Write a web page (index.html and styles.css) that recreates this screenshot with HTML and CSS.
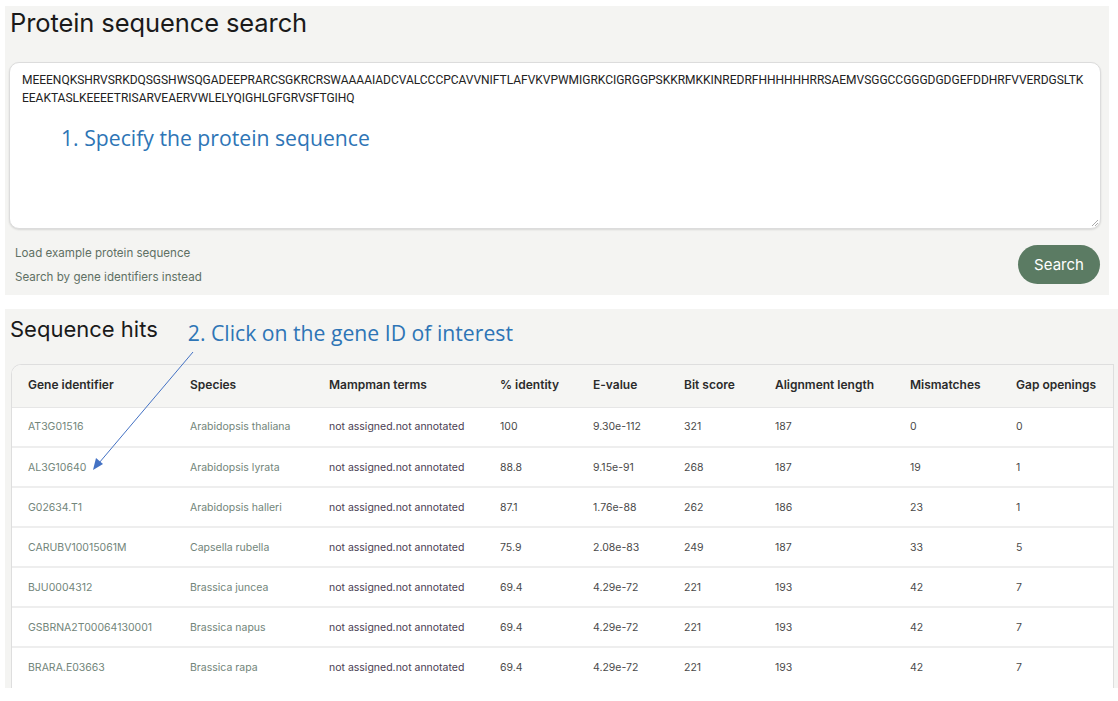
FILE: index.html
```html
<!DOCTYPE html>
<html>
<head>
<meta charset="utf-8">
<link rel="stylesheet" href="styles.css">
</head>
<body>
<div class="page">
  <section class="panel search-panel">
    <h1 class="title">Protein sequence search</h1>
    <div class="seq-box">
      <div class="seq-text">MEEENQKSHRVSRKDQSGSHWSQGADEEPRARCSGKRCRSWAAAAIADCVALCCCPCAVVNIFTLAFVKVPWMIGRKCIGRGGPSKKRMKKINREDRFHHHHHHRRSAEMVSGGCCGGGDGDGEFDDHRFVVERDGSLTK<br>EEAKTASLKEEEETRISARVEAERVWLELYQIGHLGFGRVSFTGIHQ</div>
      <div class="note note-1">1. Specify the protein sequence</div>
      <svg class="grip" width="8" height="8" viewBox="0 0 8 8"><path d="M7 1L1 7M7 4L4 7" stroke="#aaa" stroke-width="1"/></svg>
    </div>
    <div class="actions">
      <div class="links">
        <span class="link">Load example protein sequence</span>
        <span class="link">Search by gene identifiers instead</span>
      </div>
      <button class="btn">Search</button>
    </div>
  </section>

  <section class="panel hits-panel">
    <div class="hits-head">
      <h2 class="subtitle">Sequence hits</h2>
      <div class="note note-2">2. Click on the gene ID of interest</div>
    </div>
    <div class="table-card">
      <table class="hits">
        <thead>
          <tr>
            <th class="c1">Gene identifier</th>
            <th class="c2">Species</th>
            <th class="c3">Mampman terms</th>
            <th class="c4">% identity</th>
            <th class="c5">E-value</th>
            <th class="c6">Bit score</th>
            <th class="c7">Alignment length</th>
            <th class="c8">Mismatches</th>
            <th class="c9">Gap openings</th>
          </tr>
        </thead>
        <tbody>
          <tr><td class="gid">AT3G01516</td><td class="sp">Arabidopsis thaliana</td><td class="mm">not assigned.not annotated</td><td>100</td><td>9.30e-112</td><td>321</td><td>187</td><td>0</td><td>0</td></tr>
          <tr><td class="gid">AL3G10640</td><td class="sp">Arabidopsis lyrata</td><td class="mm">not assigned.not annotated</td><td>88.8</td><td>9.15e-91</td><td>268</td><td>187</td><td>19</td><td>1</td></tr>
          <tr><td class="gid">G02634.T1</td><td class="sp">Arabidopsis halleri</td><td class="mm">not assigned.not annotated</td><td>87.1</td><td>1.76e-88</td><td>262</td><td>186</td><td>23</td><td>1</td></tr>
          <tr><td class="gid">CARUBV10015061M</td><td class="sp">Capsella rubella</td><td class="mm">not assigned.not annotated</td><td>75.9</td><td>2.08e-83</td><td>249</td><td>187</td><td>33</td><td>5</td></tr>
          <tr><td class="gid">BJU0004312</td><td class="sp">Brassica juncea</td><td class="mm">not assigned.not annotated</td><td>69.4</td><td>4.29e-72</td><td>221</td><td>193</td><td>42</td><td>7</td></tr>
          <tr><td class="gid">GSBRNA2T00064130001</td><td class="sp">Brassica napus</td><td class="mm">not assigned.not annotated</td><td>69.4</td><td>4.29e-72</td><td>221</td><td>193</td><td>42</td><td>7</td></tr>
          <tr><td class="gid">BRARA.E03663</td><td class="sp">Brassica rapa</td><td class="mm">not assigned.not annotated</td><td>69.4</td><td>4.29e-72</td><td>221</td><td>193</td><td>42</td><td>7</td></tr>
        </tbody>
      </table>
    </div>
    <svg class="arrow" width="120" height="130" viewBox="0 0 120 130">
      <line x1="108" y1="3" x2="14" y2="114" stroke="#4472c4" stroke-width="1"/>
      <path d="M8 121 L11 109 L18 115 Z" fill="#4472c4"/>
    </svg>
  </section>
</div>
</body>
</html>
```

FILE: styles.css
```css
* { box-sizing: border-box; }
html, body { margin: 0; padding: 0; background: #ffffff; }
body { font-family: Inter, "Liberation Sans", sans-serif; color: #222; }

.page {
  display: flex;
  flex-direction: column;
  gap: 14px;
  padding: 6px 0 0 5px;
  width: 1118px;
  height: 688px;
  overflow: hidden;
}

.panel { background: #f4f4f2; }

.search-panel {
  width: 1104px;
  height: 289px;
  padding: 0 8px 0 4px;
  display: flex;
  flex-direction: column;
}

.title {
  margin: 0;
  font-weight: 400;
  font-size: 25.5px;
  line-height: 32px;
  padding: 1px 0 0 1px;
  color: #1a1a1a;
  letter-spacing: -0.1px;
}

.seq-box {
  position: relative;
  margin-top: 23px;
  height: 167px;
  background: #fff;
  border: 1px solid #dcdcdc;
  border-radius: 10px;
  box-shadow: 0 1px 2px rgba(0,0,0,0.12);
  padding: 8px 12px;
}

.seq-text {
  font-family: Roboto, "Liberation Sans", sans-serif;
  font-size: 12px;
  line-height: 18px;
  color: #222;
  letter-spacing: -0.02px;
  white-space: nowrap;
}

.note {
  font-family: "Open Sans", "Noto Sans", sans-serif;
  color: #2e75b6;
  font-size: 21.2px;
  line-height: 26px;
}

.note-1 { margin: 18px 0 0 39px; }

.grip { position: absolute; right: 1px; bottom: 1px; }

.actions {
  display: flex;
  justify-content: space-between;
  align-items: flex-start;
  padding: 16px 0 0 6px;
}

.links {
  display: flex;
  flex-direction: column;
  gap: 7px;
}

.link {
  font-size: 11.6px;
  line-height: 17px;
  color: #5f7064;
}

.btn {
  width: 82px;
  height: 39px;
  border: none;
  border-radius: 20px;
  background: #5b7b63;
  color: #fff;
  font-family: Inter, "Liberation Sans", sans-serif;
  font-size: 15px;
  margin-right: 1px;
}

.hits-panel {
  position: relative;
  flex: 1;
  padding: 0 0 0 6px;
  display: flex;
  flex-direction: column;
}

.hits-head {
  display: flex;
  align-items: baseline;
  height: 55px;
  padding-top: 5px;
}

.subtitle {
  margin: 0 0 0 -1px;
  font-weight: 400;
  font-size: 22px;
  line-height: 30px;
  color: #1a1a1a;
}

.note-2 { margin-left: 30px; position: relative; top: 4px; }

.table-card {
  flex: 1;
  width: 1103px;
  background: #fff;
  border: 1px solid #dedede;
  border-bottom: none;
  border-radius: 10px 0 0 0;
  overflow: hidden;
}

.hits {
  width: 100%;
  border-collapse: collapse;
  table-layout: fixed;
  font-size: 10.5px;
}

.hits th {
  background: #f5f5f3;
  height: 42px;
  text-align: left;
  font-weight: 600;
  font-size: 12px;
  color: #2b2b2b;
  padding: 0 0 3px 16px;
  border-bottom: 1px solid #e6e6e6;
}

.hits td {
  height: 40px;
  padding: 0 0 0 16px;
  color: #4a4a4a;
  border-bottom: 2px solid #eeeeee;
  white-space: nowrap;
}

.hits tbody tr:last-child td { border-bottom: none; }

.hits td.gid, .hits td.sp { color: #72857a; }
.hits td.mm { color: #4a3d52; }

.c1 { width: 162px; }
.c2 { width: 139px; }
.c3 { width: 171px; }
.c4 { width: 93px; }
.c5 { width: 91px; }
.c6 { width: 91px; }
.c7 { width: 135px; }
.c8 { width: 106px; }
.c9 { width: auto; }

.arrow {
  position: absolute;
  left: 80px;
  top: 40px;
  pointer-events: none;
}
```
